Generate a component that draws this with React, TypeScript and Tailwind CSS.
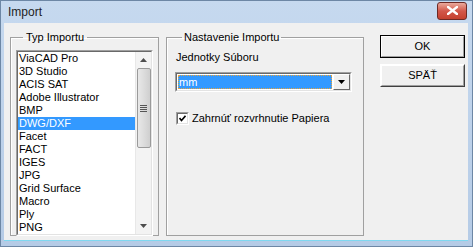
import React from "react";

const formats = [
  "ViaCAD Pro",
  "3D Studio",
  "ACIS SAT",
  "Adobe Illustrator",
  "BMP",
  "DWG/DXF",
  "Facet",
  "FACT",
  "IGES",
  "JPG",
  "Grid Surface",
  "Macro",
  "Ply",
  "PNG",
];

function TriUp() {
  return (
    <svg width="7" height="4" viewBox="0 0 7 4">
      <path d="M0 4 L3.5 0 L7 4 Z" fill="#4d4d4d" />
    </svg>
  );
}

function TriDown({ color = "#4d4d4d" }: { color?: string }) {
  return (
    <svg width="7" height="4" viewBox="0 0 7 4">
      <path d="M0 0 L3.5 4 L7 0 Z" fill={color} />
    </svg>
  );
}

function Button({ label, isDefault }: { label: string; isDefault?: boolean }) {
  return (
    <div
      className={`h-[23px] w-[85px] border ${
        isDefault ? "border-[#000000]" : "border-t-white border-l-white border-r-[#404040] border-b-[#404040]"
      } bg-[#f0f0f0]`}
    >
      <div className="h-full w-full border border-t-white border-l-white border-r-[#a0a0a0] border-b-[#a0a0a0] flex items-center justify-center">
        {label}
      </div>
    </div>
  );
}

export default function App() {
  return (
    <div className="w-[473px] h-[247px] flex flex-col border border-[#6d87a5] bg-gradient-to-b from-[#c6d9ef] to-[#b5cbe6] font-['Liberation_Sans',Arial,sans-serif] text-[11px] text-black">
      {/* title bar */}
      <div className="h-[22px] flex items-center justify-between pl-[7px] pr-[5px]">
        <span className="text-[12px] text-[#1e1e1e] pb-[1px]">Import</span>
        <div className="w-[30px] h-[18px] -mt-[3px] rounded-[3px] border border-[#6e2a25] bg-gradient-to-b from-[#e9a99c] via-[#d2574a] to-[#c5412f] flex items-center justify-center">
          <svg width="11" height="9" viewBox="0 0 11 9">
            <path d="M1 1 L10 8 M10 1 L1 8" stroke="#ffffff" strokeWidth="2.4" strokeLinecap="square" />
          </svg>
        </div>
      </div>

      {/* client area */}
      <div className="flex-1 ml-[3px] mr-[4px] mb-[5px] bg-[#f0f0f0] border-b border-[#7fd8f0] flex items-start pl-[6px] pt-[8px]">
        {/* Typ Importu */}
        <fieldset className="w-[149px] h-[205px] border border-[#a0a0a0] shadow-[inset_1px_1px_0_#ffffff] px-[5px] pb-[3px] flex flex-col">
          <legend className="ml-[7px] px-[3px] leading-[13px]">Typ Importu</legend>
          <div className="mt-[6px] flex-1 border border-t-[#a0a0a0] border-l-[#a0a0a0] border-r-white border-b-white">
            <div className="h-full border border-t-[#696969] border-l-[#696969] border-r-[#e3e3e3] border-b-[#e3e3e3] bg-white flex">
              <div className="flex-1 flex flex-col overflow-hidden">
                {formats.map((f) => (
                  <div
                    key={f}
                    className={`h-[13px] leading-[13px] pl-[1px] whitespace-nowrap ${
                      f === "DWG/DXF" ? "bg-[#3399ff] text-white" : ""
                    }`}
                  >
                    {f}
                  </div>
                ))}
              </div>
              {/* scrollbar */}
              <div className="w-[16px] bg-[#f3f3f3] border-l border-[#e8e8e8] flex flex-col items-center">
                <div className="h-[16px] flex items-center justify-center">
                  <TriUp />
                </div>
                <div className="w-[14px] h-[80px] rounded-[2px] border border-[#9a9a9a] bg-gradient-to-r from-[#e8e8e8] via-[#dcdcdc] to-[#cfcfcf] flex flex-col items-center justify-center gap-[1px]">
                  <div className="w-[7px] h-[1px] bg-[#555]" />
                  <div className="w-[7px] h-[1px] bg-[#555]" />
                  <div className="w-[7px] h-[1px] bg-[#555]" />
                  <div className="w-[7px] h-[1px] bg-[#555]" />
                </div>
                <div className="flex-1" />
                <div className="h-[16px] flex items-center justify-center">
                  <TriDown />
                </div>
              </div>
            </div>
          </div>
        </fieldset>

        {/* Nastavenie Importu */}
        <fieldset className="ml-[7px] w-[198px] h-[205px] border border-[#a0a0a0] shadow-[inset_1px_1px_0_#ffffff] pl-[8px] pr-[11px] flex flex-col">
          <legend className="ml-[7px] px-[2px] leading-[13px]">Nastavenie Importu</legend>
          <div className="mt-[7px] pl-[1px] leading-[13px]">Jednotky Súboru</div>
          <div className="mt-[8px] h-[20px] border border-t-[#a0a0a0] border-l-[#a0a0a0] border-r-white border-b-white">
            <div className="h-full border border-t-[#696969] border-l-[#696969] border-r-[#e3e3e3] border-b-[#e3e3e3] bg-white flex">
              <div className="flex-1 m-[1px] bg-[#3399ff] outline-1 outline-dotted outline-[#e8a33a] -outline-offset-1 text-white leading-[14px] pl-[1px]">
                mm
              </div>
              <div className="w-[17px] h-full border border-t-white border-l-white border-r-[#696969] border-b-[#696969] bg-[#f0f0f0] flex items-center justify-center">
                <TriDown color="#000000" />
              </div>
            </div>
          </div>
          <div className="mt-[20px] flex items-center gap-[3px] pl-[1px]">
            <div className="w-[13px] h-[13px] border border-t-[#a0a0a0] border-l-[#a0a0a0] border-r-white border-b-white">
              <div className="w-full h-full border border-t-[#696969] border-l-[#696969] border-r-[#e3e3e3] border-b-[#e3e3e3] bg-white flex items-center justify-center">
                <svg width="7" height="7" viewBox="0 0 7 7">
                  <path d="M0.5 3 L2.5 5.5 L6.5 0.8" stroke="#000" strokeWidth="1.6" fill="none" />
                </svg>
              </div>
            </div>
            <span className="leading-[13px]">Zahrnúť rozvrhnutie Papiera</span>
          </div>
        </fieldset>

        {/* buttons */}
        <div className="ml-[16px] mt-[4px] flex flex-col gap-[6px]">
          <Button label="OK" isDefault />
          <Button label="SPÄŤ" />
        </div>
      </div>
    </div>
  );
}
